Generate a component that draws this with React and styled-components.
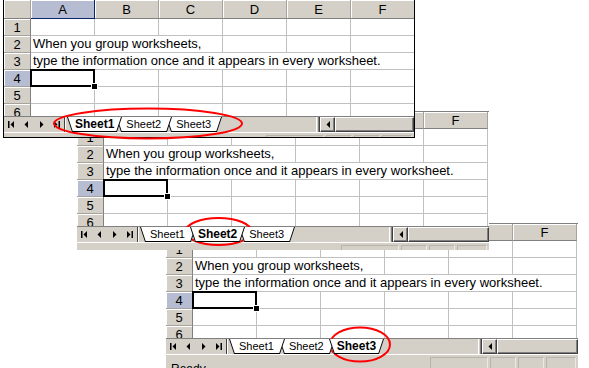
import React from "react";
import styled, { createGlobalStyle, css } from "styled-components";

const GlobalStyle = createGlobalStyle`
  html, body {
    margin: 0;
    padding: 0;
    background: #fff;
  }
  body {
    font-family: "Liberation Sans", Arial, sans-serif;
  }
`;

const GRID = "27px repeat(6, 64px)";
const COLS = ["A", "B", "C", "D", "E", "F"];

const Desk = styled.div`
  position: relative;
  width: 589px;
  height: 368px;
  overflow: hidden;
  background: #fff;
`;

// one Excel window, placed on the desk like a window on a screen
const Win = styled.div`
  position: absolute;
  left: ${p => p.$x}px;
  top: ${p => p.$y}px;
  width: ${p => p.$w}px;
  height: ${p => p.$h}px;
  display: flex;
  flex-direction: column;
  overflow: hidden;
  background: #fff;
  ${p => p.$framed
    ? css`border: 1px solid #000; border-top: none;`
    : css`border-top: 1px solid #808080;`}
`;

const Sheet = styled.div`
  height: ${p => p.$h}px;
  flex-shrink: 0;
  overflow: hidden;
`;

const Row = styled.div`
  display: grid;
  grid-template-columns: ${GRID};
  height: ${p => p.$h || 17}px;
`;

const HeadCell = styled.div`
  box-sizing: border-box;
  background: ${p => (p.$sel ? "#b6bdd2" : "#d4d0c8")};
  border-right: 1px solid ${p => (p.$sel ? "#0a246a" : "#a6a39c")};
  border-bottom: 1px solid ${p => (p.$sel ? "#0a246a" : "#808080")};
  box-shadow: inset 1px 1px 0 #fff;
  display: flex;
  align-items: center;
  justify-content: center;
  font-size: 13px;
  color: #000;
`;

const RowHead = styled.div`
  box-sizing: border-box;
  background: ${p => (p.$sel ? "#b6bdd2" : "#d4d0c8")};
  border-right: 1px solid ${p => (p.$sel ? "#0a246a" : "#808080")};
  border-bottom: 1px solid #a6a39c;
  box-shadow: inset 1px 1px 0 #fff;
  display: flex;
  align-items: center;
  justify-content: center;
  font-size: 13px;
  color: #000;
`;

const Cell = styled.div`
  box-sizing: border-box;
  grid-column: span ${p => p.$span || 1};
  border-right: 1px solid #c0c0c0;
  border-bottom: 1px solid #c0c0c0;
  padding-left: 2px;
  font-size: 13px;
  line-height: 16px;
  white-space: nowrap;
  color: #000;
  ${p => p.$active && css`
    position: relative;
    z-index: 2;
    &::before {
      content: "";
      position: absolute;
      inset: -1px;
      border: 2px solid #000;
    }
    &::after {
      content: "";
      position: absolute;
      right: -3px;
      bottom: -3px;
      width: 5px;
      height: 5px;
      background: #000;
      box-shadow: 0 0 0 1px #fff;
    }
  `}
`;

const TabBar = styled.div`
  display: flex;
  height: 15px;
  flex-shrink: 0;
  background: #d4d0c8;
  border-top: 1px solid #808080;
`;

const Nav = styled.div`
  display: flex;
  width: 60px;
`;

const NavSlot = styled.div`
  width: 15px;
  display: flex;
  align-items: center;
  justify-content: center;
`;

const Sep = styled.div`
  width: 1px;
  background: #404040;
  border-right: 1px solid #fff;
`;

const Tabs = styled.div`
  display: flex;
  align-items: flex-start;
  width: 249px;
  padding-left: 1px;
  overflow: hidden;
`;

const Tab = styled.div`
  display: flex;
  position: relative;
  z-index: ${p => p.$z};
  margin-left: ${p => (p.$first ? 0 : -6)}px;
  height: 15px;
`;

const TabLabel = styled.div`
  box-sizing: border-box;
  height: 15px;
  padding: ${p => (p.$active ? "0 2px" : "0 5px 0 4px")};
  background: #fff;
  border-bottom: 1px solid #000;
  font-size: ${p => (p.$active ? 12 : 11)}px;
  font-weight: ${p => (p.$active ? 700 : 400)};
  line-height: 14px;
  color: #000;
  white-space: nowrap;
`;

const Split = styled.div`
  box-sizing: border-box;
  width: 4px;
  background: #d4d0c8;
  border-left: 1px solid #fff;
  border-right: 1px solid #404040;
  box-shadow: inset -1px 0 0 #808080;
`;

const Raised = styled.div`
  box-sizing: border-box;
  background: #d4d0c8;
  border: 1px solid;
  border-color: #fff #404040 #404040 #fff;
  box-shadow: inset -1px -1px 0 #808080;
`;

const ScrollBtn = styled(Raised)`
  width: 15px;
  display: flex;
  align-items: center;
  justify-content: center;
`;

const Track = styled(Raised)`
  flex: 1;
`;

const Status = styled.div`
  flex: 1;
  display: flex;
  gap: 2px;
  background: #d4d0c8;
  border-top: 1px solid #fff;
  padding: 2px 2px 0 0;
  font-size: 12px;
  color: #000;
`;

const Ready = styled.div`
  flex: 1;
  padding: 5px 0 0 5px;
`;

const Panel = styled.div`
  box-sizing: border-box;
  width: ${p => p.$w}px;
  height: 18px;
  border: 1px solid;
  border-color: #b8b4ac #ece9e2 #ece9e2 #b8b4ac;
`;

const Marks = styled.svg`
  position: absolute;
  left: 0;
  top: 0;
  pointer-events: none;
`;

const NavIcon = ({ kind }) => (
  <svg width="7" height="7" viewBox="0 0 7 7">
    {kind === "first" && (
      <>
        <rect x="0" y="0" width="1.5" height="7" fill="#000" />
        <polygon points="6,0 6,7 2.5,3.5" fill="#000" />
      </>
    )}
    {kind === "prev" && <polygon points="5,0 5,7 1.5,3.5" fill="#000" />}
    {kind === "next" && <polygon points="2,0 2,7 5.5,3.5" fill="#000" />}
    {kind === "last" && (
      <>
        <polygon points="1,0 1,7 4.5,3.5" fill="#000" />
        <rect x="5.5" y="0" width="1.5" height="7" fill="#000" />
      </>
    )}
  </svg>
);

const Slant = ({ side }) =>
  side === "left" ? (
    <svg width="6" height="15" style={{ display: "block" }}>
      <polygon points="0,0 6,0 6,15 5,15" fill="#fff" />
      <line x1="0.5" y1="0" x2="5.5" y2="15" stroke="#000" />
      <line x1="5" y1="14.5" x2="6" y2="14.5" stroke="#000" />
    </svg>
  ) : (
    <svg width="6" height="15" style={{ display: "block" }}>
      <polygon points="0,0 6,0 1,15 0,15" fill="#fff" />
      <line x1="0.5" y1="15" x2="5.5" y2="0" stroke="#000" />
      <line x1="0" y1="14.5" x2="1" y2="14.5" stroke="#000" />
    </svg>
  );

const SheetTabs = ({ active }) => (
  <Tabs>
    {["Sheet1", "Sheet2", "Sheet3"].map((name, i) => {
      const on = i === active;
      return (
        <Tab key={name} $first={i === 0} $z={on ? 10 : 5 - i}>
          <Slant side="left" />
          <TabLabel $active={on}>{name}</TabLabel>
          <Slant side="right" />
        </Tab>
      );
    })}
  </Tabs>
);

const Workbook = ({ x, y, w, h, headH, framed, active }) => (
  <Win $x={x} $y={y} $w={w} $h={h} $framed={framed}>
    <Sheet $h={headH + 85 + 12}>
      <Row $h={headH}>
        <HeadCell />
        {COLS.map(c => (
          <HeadCell key={c} $sel={c === "A"}>{c}</HeadCell>
        ))}
      </Row>
      <Row>
        <RowHead>1</RowHead>
        {COLS.map(c => <Cell key={c} />)}
      </Row>
      <Row>
        <RowHead>2</RowHead>
        <Cell $span={3}>When you group worksheets,</Cell>
        <Cell />
        <Cell />
        <Cell />
      </Row>
      <Row>
        <RowHead>3</RowHead>
        <Cell $span={6}>type the information once and it appears in every worksheet.</Cell>
      </Row>
      <Row>
        <RowHead $sel>4</RowHead>
        {COLS.map(c => <Cell key={c} $active={c === "A"} />)}
      </Row>
      <Row>
        <RowHead>5</RowHead>
        {COLS.map(c => <Cell key={c} />)}
      </Row>
      <Row>
        <RowHead>6</RowHead>
        {COLS.map(c => <Cell key={c} />)}
      </Row>
    </Sheet>
    <TabBar>
      <Nav>
        <NavSlot><NavIcon kind="first" /></NavSlot>
        <NavSlot><NavIcon kind="prev" /></NavSlot>
        <NavSlot><NavIcon kind="next" /></NavSlot>
        <NavSlot><NavIcon kind="last" /></NavSlot>
      </Nav>
      <Sep />
      <SheetTabs active={active} />
      <Split />
      <ScrollBtn>
        <svg width="4" height="7"><polygon points="4,0 4,7 0.5,3.5" fill="#000" /></svg>
      </ScrollBtn>
      <Track />
    </TabBar>
    <Status>
      <Ready>Ready</Ready>
      <Panel $w={58} />
      <Panel $w={26} />
      <Panel $w={26} />
      <Panel $w={30} />
    </Status>
  </Win>
);

export default function App() {
  return (
    <Desk>
      <GlobalStyle />
      <Workbook x={166} y={223} w={412} h={145} headH={17} active={2} />
      <Workbook x={77} y={111} w={412} h={138} headH={17} active={1} />
      <Workbook x={3} y={0} w={410} h={137} headH={19} framed active={0} />
      <Marks width="589" height="368">
        <ellipse cx="148" cy="123.5" rx="94" ry="15" fill="none" stroke="#f00" strokeWidth="2" />
        <ellipse cx="218.5" cy="231.5" rx="33" ry="13.5" fill="none" stroke="#f00" strokeWidth="2" />
        <ellipse cx="360" cy="344.5" rx="30" ry="17" fill="none" stroke="#f00" strokeWidth="2" />
      </Marks>
    </Desk>
  );
}
